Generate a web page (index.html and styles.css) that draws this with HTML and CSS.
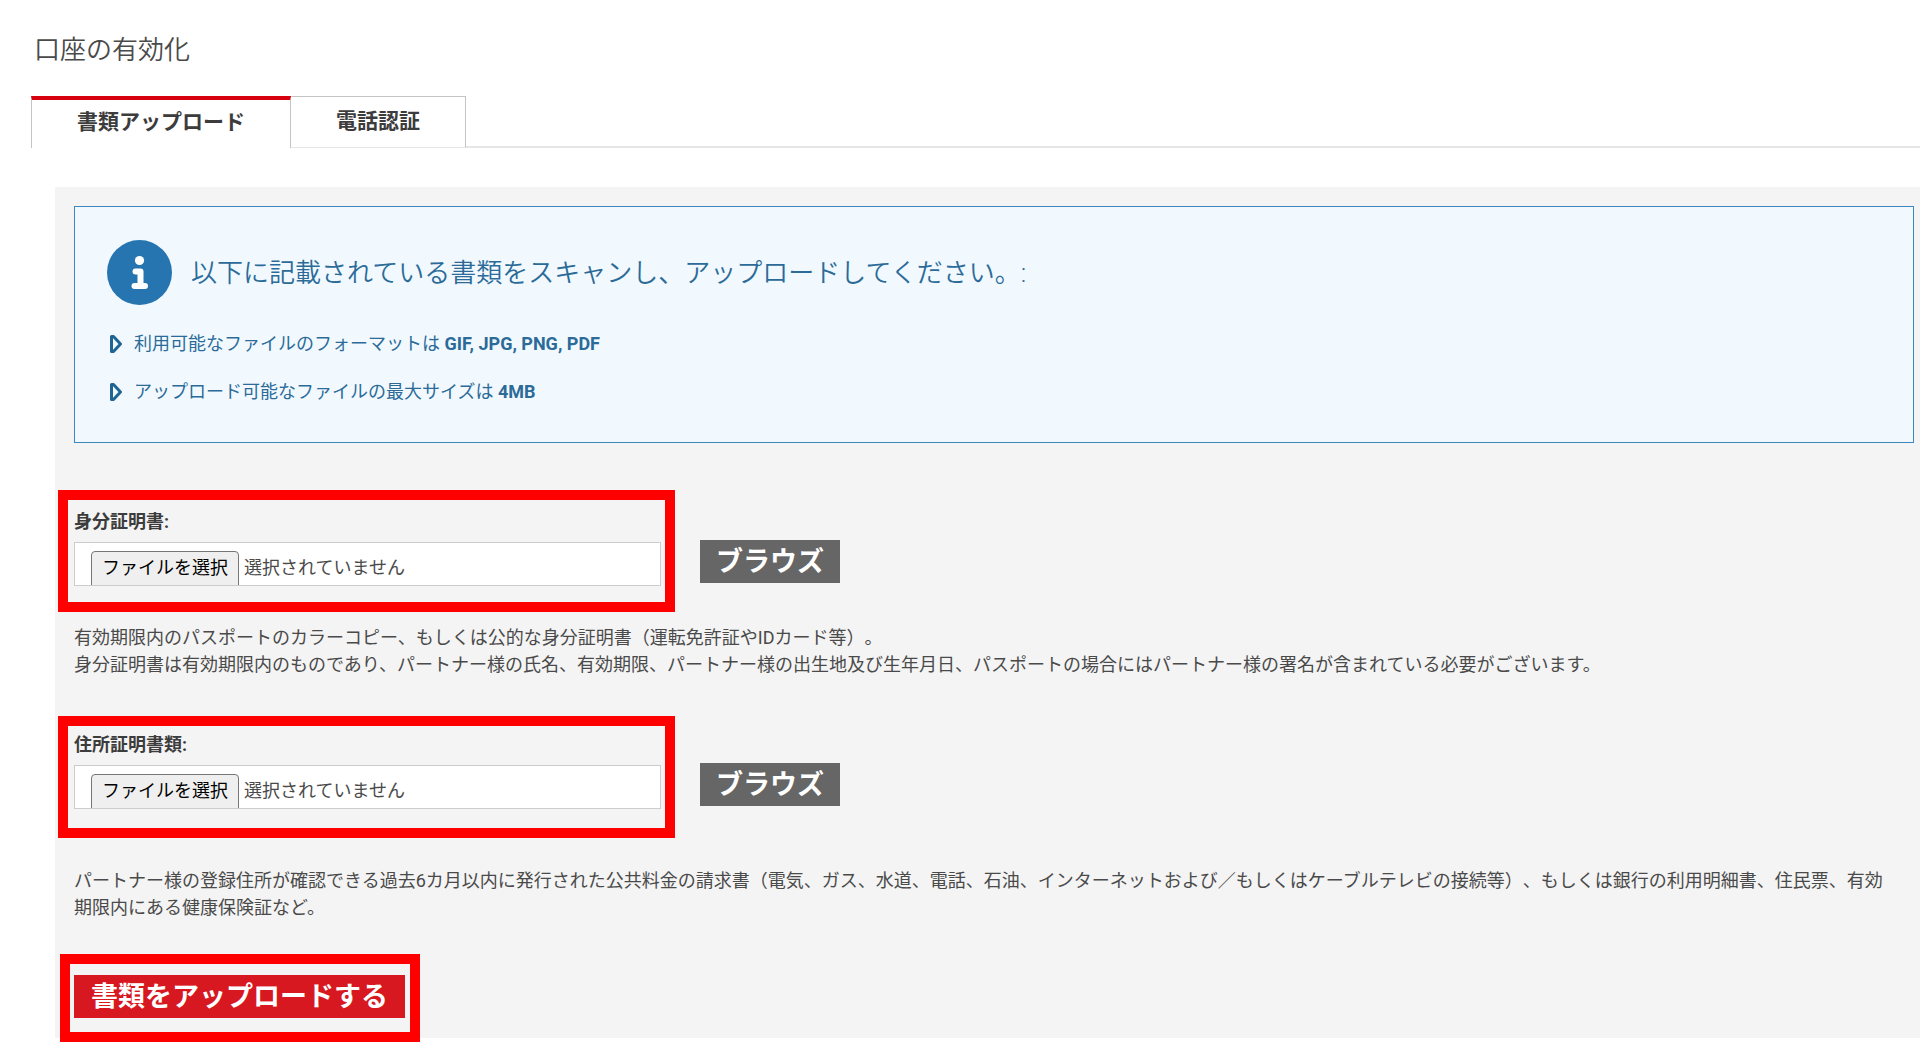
FILE: index.html
```
<!DOCTYPE html>
<html lang="ja">
<head>
    <meta charset="UTF-8">
    <meta name="viewport" content="width=device-width, initial-scale=1.0">
    <title>口座の有効化</title>
    <link rel="stylesheet" href="styles.css">
</head>
<body>
    <h1>口座の有効化</h1>

    <nav class="tabs">
        <a href="#upload" class="tab active">書類アップロード</a>
        <a href="#phone" class="tab">電話認証</a>
    </nav>

    <main class="panel" id="upload">
        <section class="info">
            <div class="info-head">
                <svg class="info-icon" viewBox="0 0 65 65" aria-hidden="true">
                    <circle cx="32.5" cy="32.5" r="32.5" fill="#2775b0"/>
                    <circle cx="32.5" cy="20.5" r="4.6" fill="#fff"/>
                    <path d="M28.5 31.5h5v14.5M27.5 46h10.5" fill="none" stroke="#fff" stroke-width="6" stroke-linecap="round" stroke-linejoin="round"/>
                </svg>
                <h2>以下に記載されている書類をスキャンし、アップロードしてください。:</h2>
            </div>
            <ul>
                <li>
                    <svg class="arrow" viewBox="0 0 14 20" aria-hidden="true"><path d="M2.5 2.5v15h2l7-7.5-7-7.5z"/></svg>
                    <span>利用可能なファイルのフォーマットは <strong>GIF, JPG, PNG, PDF</strong></span>
                </li>
                <li>
                    <svg class="arrow" viewBox="0 0 14 20" aria-hidden="true"><path d="M2.5 2.5v15h2l7-7.5-7-7.5z"/></svg>
                    <span>アップロード可能なファイルの最大サイズは <strong>4MB</strong></span>
                </li>
            </ul>
        </section>

        <form>
            <div class="upload-row">
                <div class="field highlight highlight-id">
                    <label for="idFile">身分証明書:</label>
                    <div class="file-box">
                        <span class="file-button">ファイルを選択</span>
                        <span>選択されていません</span>
                        <input type="file" id="idFile">
                    </div>
                </div>
                <button type="button" class="browse">ブラウズ</button>
            </div>
            <p class="help">有効期限内のパスポートのカラーコピー、もしくは公的な身分証明書（運転免許証やIDカード等）。<br>身分証明書は有効期限内のものであり、パートナー様の氏名、有効期限、パートナー様の出生地及び生年月日、パスポートの場合にはパートナー様の署名が含まれている必要がございます。</p>

            <div class="upload-row">
                <div class="field highlight highlight-address">
                    <label for="addressFile">住所証明書類:</label>
                    <div class="file-box">
                        <span class="file-button">ファイルを選択</span>
                        <span>選択されていません</span>
                        <input type="file" id="addressFile">
                    </div>
                </div>
                <button type="button" class="browse">ブラウズ</button>
            </div>
            <p class="help help-address">パートナー様の登録住所が確認できる過去6カ月以内に発行された公共料金の請求書（電気、ガス、水道、電話、石油、インターネットおよび／もしくはケーブルテレビの接続等）、もしくは銀行の利用明細書、住民票、有効期限内にある健康保険証など。</p>

            <div class="submit highlight highlight-submit">
                <button type="submit">書類をアップロードする</button>
            </div>
        </form>
    </main>
</body>
</html>
```
FILE: styles.css
```
* {
    box-sizing: border-box;
}

body {
    margin: 0;
    padding: 30px 0 0;
    min-height: 100vh;
    background-color: #fff;
    color: #4a4a4a;
    font-family: Roboto, "Noto Sans CJK JP", sans-serif;
    font-size: 18px;
    line-height: 27px;
    text-spacing-trim: space-all;
}

h1 {
    margin: 0 0 26px 34px;
    font-size: 26px;
    font-weight: 350;
    line-height: 40px;
}

/* tabs */
.tabs {
    display: flex;
    margin-left: 31px;
    height: 52px;
    box-shadow: inset 0 -2px #e6e6e6;
}

.tab {
    padding: 0 45px;
    border: 1px solid #c4c4c4;
    border-left: 0;
    border-bottom-color: #e6e6e6;
    background-color: #fff;
    color: #3c3c3c;
    font-size: 21px;
    font-weight: bold;
    line-height: 48px;
    text-decoration: none;
}

.tab.active {
    border-left: 1px solid #c4c4c4;
    border-top: 4px solid #d7000f;
    border-bottom: 0;
    line-height: 44px;
}

/* grey area below the tabs */
.panel {
    margin: 39px 0 0 55px;
    padding: 19px 6px 20px 19px;
    background-color: #f4f4f4;
}

.info {
    margin-bottom: 65px;
    padding: 33px 32px 37px;
    border: 1px solid #3d87bd;
    background-color: #f1f9ff;
    color: #2c6b98;
}

.info-head {
    display: flex;
    align-items: center;
    gap: 19px;
}

.info-icon {
    width: 65px;
    height: 65px;
    flex: none;
}

.info h2 {
    margin: 0;
    font-size: 26px;
    font-weight: 350;
    line-height: 40px;
}

.info ul {
    margin: 25px 0 0;
    padding: 0;
    list-style: none;
}

.info li {
    display: flex;
    align-items: center;
    gap: 11px;
    padding-left: 2px;
}

.info li + li {
    margin-top: 21px;
}

.arrow {
    width: 14px;
    height: 20px;
    flex: none;
    fill: none;
    stroke: #1f6493;
    stroke-width: 3;
    stroke-linejoin: round;
}

/* upload fields */
.upload-row {
    display: flex;
    align-items: flex-end;
    gap: 39px;
}

.field {
    width: 587px;
}

.field label {
    display: block;
    margin-bottom: 7px;
    color: #3c3c3c;
    font-weight: bold;
}

.file-box {
    position: relative;
    display: flex;
    gap: 5px;
    height: 44px;
    padding: 8px 0 0 16px;
    border: 1px solid #ccc;
    background-color: #fff;
    line-height: 34px;
    overflow: hidden;
}

.file-button {
    height: 40px;
    padding: 0 10px;
    border: 1px solid #767676;
    border-radius: 4px;
    background-color: #efefef;
    color: #000;
    line-height: 32px;
}

.file-box input {
    position: absolute;
    inset: 0;
    width: 100%;
    opacity: 0;
    cursor: pointer;
}

.browse,
.submit button {
    height: 43px;
    padding: 0 16px;
    border: 0;
    background-color: #666;
    color: #fff;
    font-family: inherit;
    font-size: 27px;
    font-weight: bold;
    line-height: 40px;
    cursor: pointer;
}

.browse {
    margin-bottom: 3px;
}

.submit button {
    display: block;
    padding: 0 17px;
    background-color: #d71820;
}

.help {
    margin: 38px 14px 53px 0;
}

.help-address {
    margin-top: 58px;
    margin-bottom: 54px;
}

/* red frames drawn round the steps */
.highlight {
    position: relative;
}

.highlight::after {
    content: "";
    position: absolute;
    border: 10px solid #f00;
    pointer-events: none;
}

.highlight-id::after {
    inset: -18px -14px -26px -16px;
}

.highlight-address::after {
    inset: -15px -14px -29px -16px;
}

.submit {
    width: fit-content;
}

.highlight-submit::after {
    inset: -21px -15px -24px -14px;
}
```
